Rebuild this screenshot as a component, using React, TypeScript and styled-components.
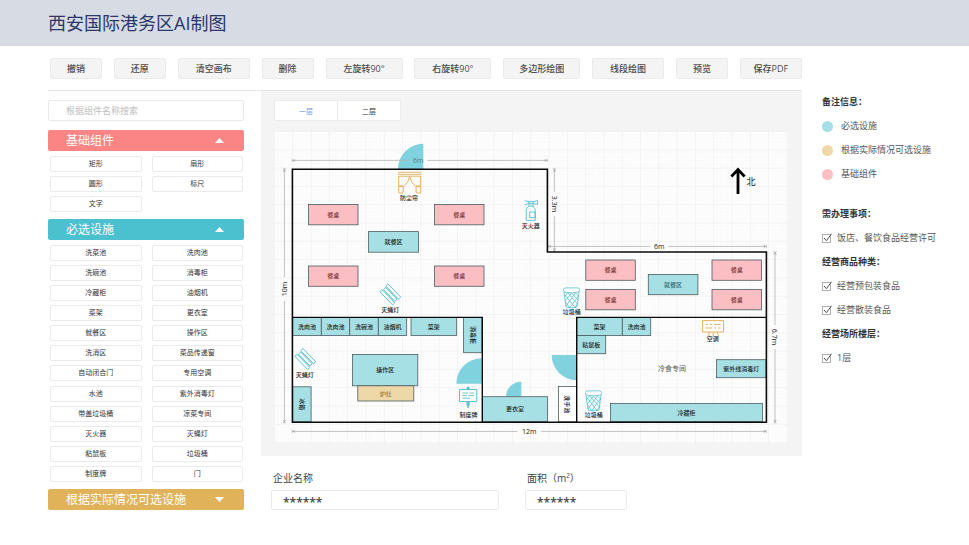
import React, { useState } from "react";
import styled, { createGlobalStyle, css } from "styled-components";

const GlobalStyle = createGlobalStyle`
  *, *::before, *::after { box-sizing: border-box; }
  body {
    margin: 0;
    background: #fff;
    color: #555;
    font-family: "Open Sans", "Noto Sans CJK SC", sans-serif;
  }
  button, input { font-family: inherit; margin: 0; }
`;

const teal = "#a6e0e5";
const tealDeep = "#7fd2de";
const tealLine = "#3fb9c8";
const pink = "#fbbfc3";
const sand = "#efd8a8";
const gold = "#e0a94a";
const ink = "#1c1c1c";

/* ---------- page frame ---------- */

const Header = styled.header`
  background: #d6dbe4;
  padding: 10px 48px;
`;

const Title = styled.h1`
  margin: 0;
  font-size: 18px;
  line-height: 26px;
  font-weight: 400;
  color: #2a3768;
`;

const Page = styled.main`
  display: grid;
  grid-template-columns: minmax(0, 1fr) 147px;
  column-gap: 20px;
  padding-left: 48px;
`;

const Toolbar = styled.div`
  display: flex;
  justify-content: space-between;
  padding: 12px 0 11px 2px;
  border-bottom: 1px solid #e6e6e6;
`;

const ToolButton = styled.button<{ $width: number }>`
  width: ${(p) => p.$width}px;
  height: 21px;
  padding: 0;
  border: 1px solid #ebebeb;
  border-radius: 2px;
  background: #f4f4f4;
  color: #4a4a4a;
  font-size: 9px;
  line-height: 19px;
  font-weight: 500;
  white-space: nowrap;
`;

const Workspace = styled.div`
  display: grid;
  grid-template-columns: 196px minmax(0, 1fr);
  column-gap: 17px;
`;

/* ---------- component palette ---------- */

const Sidebar = styled.aside`
  display: flex;
  flex-direction: column;
  padding-top: 9px;
`;

const fieldStyle = css`
  border: 1px solid #e9e9e9;
  border-radius: 2px;
  background: #fff;
  outline: none;
`;

const Search = styled.input`
  ${fieldStyle}
  width: 100%;
  height: 21px;
  padding: 0 17px;
  margin-bottom: 9px;
  font-size: 9px;
  color: #555;
  &::placeholder { color: #bdbdbd; }
`;

const Group = styled.section<{ $grow?: boolean }>`
  display: flex;
  flex-direction: column;
  flex: ${(p) => (p.$grow ? "1 0 auto" : "0 0 auto")};
`;

const GroupHeader = styled.button<{ $color: string }>`
  display: flex;
  align-items: center;
  justify-content: space-between;
  width: 100%;
  height: 21px;
  padding: 0 20px 0 18px;
  border: 0;
  border-radius: 2px;
  background: ${(p) => p.$color};
  color: #fff;
  font-size: 12px;
  line-height: 20px;
`;

const Palette = styled.div`
  display: grid;
  flex: 1;
  grid-template-columns: 1fr 1fr;
  column-gap: 10px;
  row-gap: 4px;
  align-content: space-between;
  padding: 5px 1px 7px 2px;
`;

const PaletteItem = styled.button`
  height: 16px;
  padding: 0;
  border: 1px solid #ebebeb;
  border-radius: 2px;
  background: #fff;
  color: #333;
  font-size: 7px;
  line-height: 14px;
`;

/* ---------- drawing area ---------- */

const Board = styled.div`
  background: #f4f4f4;
  padding: 9px 14px 13px 13px;
`;

const Tabs = styled.div`
  display: inline-grid;
  grid-template-columns: 62px 63px;
  margin-bottom: 10px;
  border: 1px solid #ececec;
  vertical-align: top;
`;

const Tab = styled.button<{ $active: boolean }>`
  height: 19px;
  padding: 0;
  border: 0;
  background: #fff;
  color: ${(p) => (p.$active ? "#6f97d8" : "#333")};
  font-size: 7px;
  & + & { border-left: 1px solid #ececec; }
`;

const Plan = styled.svg`
  display: block;
  width: 100%;
  background: #fdfdfd;
`;

const Form = styled.form`
  display: grid;
  grid-template-columns: 228px 102px;
  column-gap: 26px;
  padding: 13px 0 0 10px;
`;

const Field = styled.label`
  display: flex;
  flex-direction: column;
  gap: 3px;
  font-size: 10px;
  line-height: 18px;
  color: #444;
`;

const FieldName = styled.span`
  padding-left: 2px;
`;

const FieldInput = styled.input`
  ${fieldStyle}
  width: 100%;
  height: 20px;
  padding: 4px 10px 0 11px;
  font-size: 12px;
  font-weight: 600;
  color: #444;
`;

/* ---------- notes ---------- */

const Notes = styled.aside`
  display: flex;
  flex-direction: column;
  padding-top: 44px;
  font-size: 9px;
  line-height: 24px;
  white-space: nowrap;
`;

const NoteTitle = styled.h2`
  margin: 0;
  font-size: 9px;
  line-height: 24px;
  font-weight: 700;
  color: #333;
`;

const Legend = styled.ul`
  margin: 0 0 16px;
  padding: 0;
  list-style: none;
`;

const LegendItem = styled.li`
  display: flex;
  align-items: center;
  gap: 8px;
`;

const Dot = styled.span<{ $color: string }>`
  width: 11px;
  height: 11px;
  border-radius: 50%;
  background: ${(p) => p.$color};
`;

const CheckLabel = styled.label`
  display: flex;
  align-items: center;
  gap: 5px;
`;

const CheckCell = styled.span`
  display: grid;
  width: 10px;
  height: 10px;
  & > * { grid-area: 1 / 1; }
`;

const CheckInput = styled.input`
  appearance: none;
  width: 9px;
  height: 9px;
  border: 1px solid #b0b0b0;
  align-self: end;
  &:not(:checked) + svg { visibility: hidden; }
`;

const Tick = styled.svg`
  pointer-events: none;
  width: 10px;
  height: 10px;
`;

/* ---------- data ---------- */

const tools: [string, number][] = [
  ["撤销", 52], ["还原", 52], ["清空画布", 72], ["删除", 52], ["左旋转90°", 77],
  ["右旋转90°", 77], ["多边形绘图", 77], ["线段绘图", 72], ["预览", 52], ["保存PDF", 62],
];

const groups = [
  { name: "基础组件", color: "#fb8585", open: true, items: ["矩形", "扇形", "圆形", "标尺", "文字"] },
  {
    name: "必选设施",
    color: "#4bc0cf",
    open: true,
    grow: true,
    items: [
      "洗菜池", "洗肉池", "洗碗池", "消毒柜", "冷藏柜", "油烟机", "菜架", "更衣室",
      "就餐区", "操作区", "洗消区", "菜品传递窗", "自动闭合门", "专用空调", "水池", "紫外消毒灯",
      "带盖垃圾桶", "凉菜专间", "灭火器", "灭蝇灯", "粘鼠板", "垃圾桶", "制度牌", "门",
    ],
  },
  { name: "根据实际情况可选设施", color: "#e0b25a", open: false, items: [] as string[] },
];

type Block = { x: number; y: number; w: number; h: number; fill: string; text: string; color?: string; turned?: boolean };

const blocks: Block[] = [
  ...[[34.5, 73.5], [160.5, 73.5], [34.5, 135], [160.5, 135], [311.8, 129], [438, 129], [311.8, 158.5], [438, 158.5]].map(
    ([x, y]) => ({ x, y, w: 49.5, h: 20.3, fill: pink, text: "餐桌", color: "#7d3a40" })
  ),
  { x: 94.5, y: 100.6, w: 50, h: 20.6, fill: teal, text: "就餐区" },
  { x: 374.3, y: 143.5, w: 49.6, h: 20.2, fill: teal, text: "就餐区", color: "#2c6a70" },
  { x: 18.7, y: 186.5, w: 28.6, h: 18, fill: teal, text: "洗肉池" },
  { x: 47.3, y: 186.5, w: 28.4, h: 18, fill: teal, text: "洗肉池" },
  { x: 75.7, y: 186.5, w: 28.6, h: 18, fill: teal, text: "洗碗池" },
  { x: 104.3, y: 186.5, w: 28.4, h: 18, fill: teal, text: "油烟机" },
  { x: 137, y: 186.5, w: 45.7, h: 18, fill: teal, text: "菜架" },
  { x: 189.6, y: 186.5, w: 18.4, h: 35.2, fill: teal, text: "消毒柜", turned: true },
  { x: 78.5, y: 223.4, w: 65.3, h: 31.4, fill: teal, text: "操作区" },
  { x: 83.8, y: 254.8, w: 56, h: 15.2, fill: sand, text: "炉灶", color: "#9b7a3c" },
  { x: 18.7, y: 255.8, w: 18.4, h: 35, fill: teal, text: "冰箱", turned: true },
  { x: 208.6, y: 265.7, w: 64.8, h: 25, fill: teal, text: "更衣室" },
  { x: 284.4, y: 255.5, w: 18.2, h: 35.3, fill: "#fff", text: "洗手池", turned: true },
  { x: 302.7, y: 186.5, w: 45.6, h: 18, fill: teal, text: "菜架" },
  { x: 348.3, y: 186.5, w: 28.4, h: 18, fill: teal, text: "洗肉池" },
  { x: 302.7, y: 204.5, w: 29, h: 18.2, fill: teal, text: "粘鼠板" },
  { x: 442.4, y: 228.7, w: 49.6, h: 18, fill: teal, text: "紫外线消毒灯" },
  { x: 336.4, y: 272.5, w: 152, h: 18.2, fill: teal, text: "冷藏柜" },
];

const captions = [
  { x: 135, y: 66.5, text: "防尘帘" },
  { x: 256.7, y: 94.5, text: "灭火器" },
  { x: 116.3, y: 178.5, text: "灭蝇灯" },
  { x: 30.7, y: 244, text: "灭蝇灯" },
  { x: 194.5, y: 284.3, text: "制度牌" },
  { x: 297.8, y: 180.7, text: "垃圾桶" },
  { x: 319.7, y: 284, text: "垃圾桶" },
  { x: 438.7, y: 208.3, text: "空调" },
];

type Dim = { x: number; y: number; length: number; angle: 0 | 90; text: string; at: number; flip?: number; color?: string };

const dims: Dim[] = [
  { x: 19.3, y: 29.4, length: 253, angle: 0, text: "6m", at: 125, color: "#5d7f85" },
  { x: 10.4, y: 39, length: 251.7, angle: 90, text: "10m", at: 119, flip: 180 },
  { x: 280.4, y: 39, length: 80, angle: 90, text: "3.3m", at: 34 },
  { x: 275.3, y: 115.4, length: 216, angle: 0, text: "6m", at: 110 },
  { x: 501, y: 122, length: 168.7, angle: 90, text: "6.7m", at: 84 },
  { x: 19.3, y: 300.4, length: 472, angle: 0, text: "12m", at: 236 },
];

/* ---------- plan parts ---------- */

const Label = ({ x, y, size = 6, color = ink, rotate = 0, weight = 500, children }: {
  x: number; y: number; size?: number; color?: string; rotate?: number; weight?: number; children: React.ReactNode;
}) => (
  <text
    transform={`translate(${x} ${y}) rotate(${rotate})`}
    fontSize={size}
    fontWeight={weight}
    fill={color}
    textAnchor="middle"
    dy="0.36em"
  >
    {children}
  </text>
);

const Dimension = ({ x, y, length, angle, text, at, flip = 0, color = "#222" }: Dim) => {
  const half = text.length > 2 ? 12 : 9;
  return (
    <g transform={`translate(${x} ${y}) rotate(${angle})`}>
      <path d={`M0 0H${at - half}M${at + half} 0H${length}`} stroke="#b3b3b3" strokeWidth="0.8" />
      {[0, length].map((p) => (
        <path key={p} d={`M${p - 1.7} -1.7l3.4 3.4m0 -3.4l-3.4 3.4M${p - 1.7} 0h3.4`} stroke="#aaa" strokeWidth="0.7" />
      ))}
      <Label x={at} y={0} size={7} rotate={flip} color={color}>{text}</Label>
    </g>
  );
};

const Lamp = ({ x, y }: { x: number; y: number }) => (
  <g transform={`translate(${x} ${y}) rotate(46)`} fill="#fff" stroke={tealLine} strokeWidth="0.8">
    <rect x="-8" y="-5.2" width="16" height="10.4" fill="#d8f1f4" stroke="none" />
    <rect x="-9.2" y="-5.6" width="18.4" height="3" />
    <rect x="-8.2" y="-1.5" width="16.4" height="3" />
    <rect x="-9.2" y="2.6" width="18.4" height="3" />
  </g>
);

const Bin = ({ x, y }: { x: number; y: number }) => (
  <g transform={`translate(${x} ${y})`} fill="none" stroke={tealLine} strokeWidth="0.7">
    <path d="M0.5 2Q0.5 0.5 3 0.5H14Q16.5 0.5 16.5 2L16 4.6Q8.5 6.4 1 4.6ZM1 4.6L3 19.6Q8.5 21.4 14 19.6L16 4.6" fill="#fff" />
    <path d="M1.6 9L4.8 5.4L14.8 17M2.2 13.6L8.5 5.7L15.4 13.2M3 18.6L12.4 5.5L16 8.8M2 7.6L12.2 20.2M2.6 14.4L6.6 20.4M6.6 20.4L15.8 8M11.6 20.2L14.8 16" />
  </g>
);

const Curtain = () => (
  <g transform="translate(124 40)" fill="none" stroke={gold} strokeWidth="0.9">
    <path d="M0 1.3H23.4M0 3.3H23.4" strokeWidth="0.8" />
    <path d="M0.7 5.2H22.7V15.2H17.8Q13 12.4 11.7 5.6Q10.4 12.4 5.6 15.2H0.7Z" />
    <rect x="0.7" y="15.2" width="4.6" height="6.8" rx="1" />
    <rect x="18.1" y="15.2" width="4.6" height="6.8" rx="1" />
  </g>
);

const Extinguisher = () => (
  <g transform="translate(249.6 68.6)" fill="none" stroke={tealLine} strokeWidth="0.8">
    <path d="M1 1.2L5.4 2H9.4L14 1V4.8L9.4 4H5.4L1 5M5.4 2V6.4M9.4 2V6.4" />
    <path d="M5.4 6.4H9.4L11.6 9.6V20.8H2.6V9.6ZM6 12.4H11.6V18H6Z" />
  </g>
);

const Sign = () => (
  <g transform="translate(185 255.6)" fill="none" stroke={tealLine} strokeWidth="0.9">
    <path d="M0.5 3H17.8V15H0.5Z" fill="#fff" />
    <path d="M3.4 6.4H9M10.6 6.4H15M3.4 9H8M9.6 9H15M3.4 11.6H11" strokeWidth="0.8" />
    <path d="M7.4 1.6H10.8M9.1 0V3M9.1 15V21.4" strokeWidth="1.2" />
    <path d="M8 15V18.6H10.2V15" />
  </g>
);

const AirConditioner = () => (
  <g transform="translate(428 189)" fill="none" stroke={gold} strokeWidth="0.9">
    <path d="M0.6 0.6H21.6V12H0.6Z" fill="#fff" />
    <path d="M3.6 4.4H6M7.6 4.4H10M12 4.4H18.6M3.6 8H10M12 8H14M16 8H18.6M7 12V14.4L5.8 16M11.2 12V16M15.6 12V14.4L16.8 16" />
  </g>
);

const FloorPlan = () => (
  <Plan viewBox="0 0 514 312" role="img" aria-label="平面图">
    <defs>
      <pattern id="grid" width="18.3" height="18.3" patternUnits="userSpaceOnUse">
        <path d="M3.66 0V18.3M7.32 0V18.3M10.98 0V18.3M14.64 0V18.3M0 3.66H18.3M0 7.32H18.3M0 10.98H18.3M0 14.64H18.3" stroke="#f8f8f8" strokeWidth="0.6" />
        <path d="M0 0V18.3M0 0H18.3" stroke="#e9e9e9" strokeWidth="1" />
      </pattern>
    </defs>
    <rect width="514" height="312" fill="url(#grid)" />

    <g fill={tealDeep}>
      <path d="M149.3 38V12.8A25.2 25.2 0 0 0 124 38Z" />
      <path d="M207.6 252.8V227.2A25.4 25.4 0 0 0 182.4 252.8Z" />
      <path d="M247.4 265.6V250.7A15 15 0 0 0 232 265.6Z" />
      <path d="M302.5 224V249.2A25 25 0 0 1 277.7 224Z" />
    </g>

    {dims.map((d, i) => <Dimension key={i} {...d} />)}

    {blocks.map((b, i) => (
      <g key={i}>
        <rect x={b.x} y={b.y} width={b.w} height={b.h} fill={b.fill} stroke="#4d5c60" strokeWidth="0.8" />
        <Label x={b.x + b.w / 2} y={b.y + b.h / 2} color={b.color} rotate={b.turned ? 90 : 0}>{b.text}</Label>
      </g>
    ))}

    <g fill="none" stroke="#0a0a0a" strokeWidth="1.6">
      <path d="M18.4 38.2H273.4V121H492.4V291.2H18.4Z" />
      <path d="M18.4 186.4H208.3V291.2M302.7 291.2V186.4H492.4" strokeWidth="1.4" />
    </g>

    <Curtain />
    <Extinguisher />
    <Lamp x={116.3} y={163.4} />
    <Lamp x={31.3} y={228} />
    <Sign />
    <Bin x={289} y={156.4} />
    <Bin x={311} y={259.4} />
    <AirConditioner />

    {captions.map((c, i) => <Label key={i} x={c.x} y={c.y}>{c.text}</Label>)}
    <Label x={398} y={237.6} size={7} weight={400} color="#555">冷食专间</Label>

    <path d="M464 63V39M457.4 45.4L464 38.6L470.6 45.4" fill="none" stroke="#000" strokeWidth="2.8" />
    <Label x={477} y={50.6} size={9} weight={400}>北</Label>
  </Plan>
);

/* ---------- controls ---------- */

const PaletteGroup = ({ name, color, items, open: initial, grow }: {
  name: string; color: string; items: string[]; open: boolean; grow?: boolean;
}) => {
  const [open, setOpen] = useState(initial);
  return (
    <Group $grow={grow && open}>
      <GroupHeader type="button" $color={color} aria-expanded={open} onClick={() => setOpen(!open)}>
        {name}
        <svg width="9" height="5" viewBox="0 0 9 5" aria-hidden="true">
          <path d={open ? "M0 5L4.5 0L9 5Z" : "M0 0L4.5 5L9 0Z"} fill="#fff" />
        </svg>
      </GroupHeader>
      {open && items.length > 0 && (
        <Palette>
          {items.map((item) => <PaletteItem key={item} type="button">{item}</PaletteItem>)}
        </Palette>
      )}
    </Group>
  );
};

const Check = ({ children }: { children: React.ReactNode }) => (
  <CheckLabel>
    <CheckCell>
      <CheckInput type="checkbox" defaultChecked />
      <Tick viewBox="0 0 10 10" aria-hidden="true">
        <path d="M2 5L4.4 7.8L9.6 0.6" fill="none" stroke="#555" strokeWidth="1" />
      </Tick>
    </CheckCell>
    {children}
  </CheckLabel>
);

export default function App() {
  const [floor, setFloor] = useState(0);
  return (
    <>
      <GlobalStyle />
      <Header>
        <Title>西安国际港务区AI制图</Title>
      </Header>
      <Page>
        <div>
          <Toolbar>
            {tools.map(([name, width]) => <ToolButton key={name} type="button" $width={width}>{name}</ToolButton>)}
          </Toolbar>
          <Workspace>
            <Sidebar>
              <Search type="text" placeholder="根据组件名称搜索" aria-label="根据组件名称搜索" />
              {groups.map((g) => <PaletteGroup key={g.name} {...g} />)}
            </Sidebar>
            <div>
              <Board>
                <Tabs role="tablist">
                  {["一层", "二层"].map((t, i) => (
                    <Tab key={t} type="button" role="tab" aria-selected={floor === i} $active={floor === i} onClick={() => setFloor(i)}>
                      {t}
                    </Tab>
                  ))}
                </Tabs>
                <FloorPlan />
              </Board>
              <Form>
                <Field>
                  <FieldName>企业名称</FieldName>
                  <FieldInput type="text" defaultValue="******" />
                </Field>
                <Field>
                  <FieldName>面积（m²）</FieldName>
                  <FieldInput type="text" defaultValue="******" />
                </Field>
              </Form>
            </div>
          </Workspace>
        </div>
        <Notes>
          <NoteTitle>备注信息：</NoteTitle>
          <Legend>
            <LegendItem><Dot $color={teal} />必选设施</LegendItem>
            <LegendItem><Dot $color={sand} />根据实际情况可选设施</LegendItem>
            <LegendItem><Dot $color={pink} />基础组件</LegendItem>
          </Legend>
          <NoteTitle>需办理事项：</NoteTitle>
          <Check>饭店、餐饮食品经营许可</Check>
          <NoteTitle>经营商品种类：</NoteTitle>
          <Check>经营预包装食品</Check>
          <Check>经营散装食品</Check>
          <NoteTitle>经营场所楼层：</NoteTitle>
          <Check>1层</Check>
        </Notes>
      </Page>
    </>
  );
}
